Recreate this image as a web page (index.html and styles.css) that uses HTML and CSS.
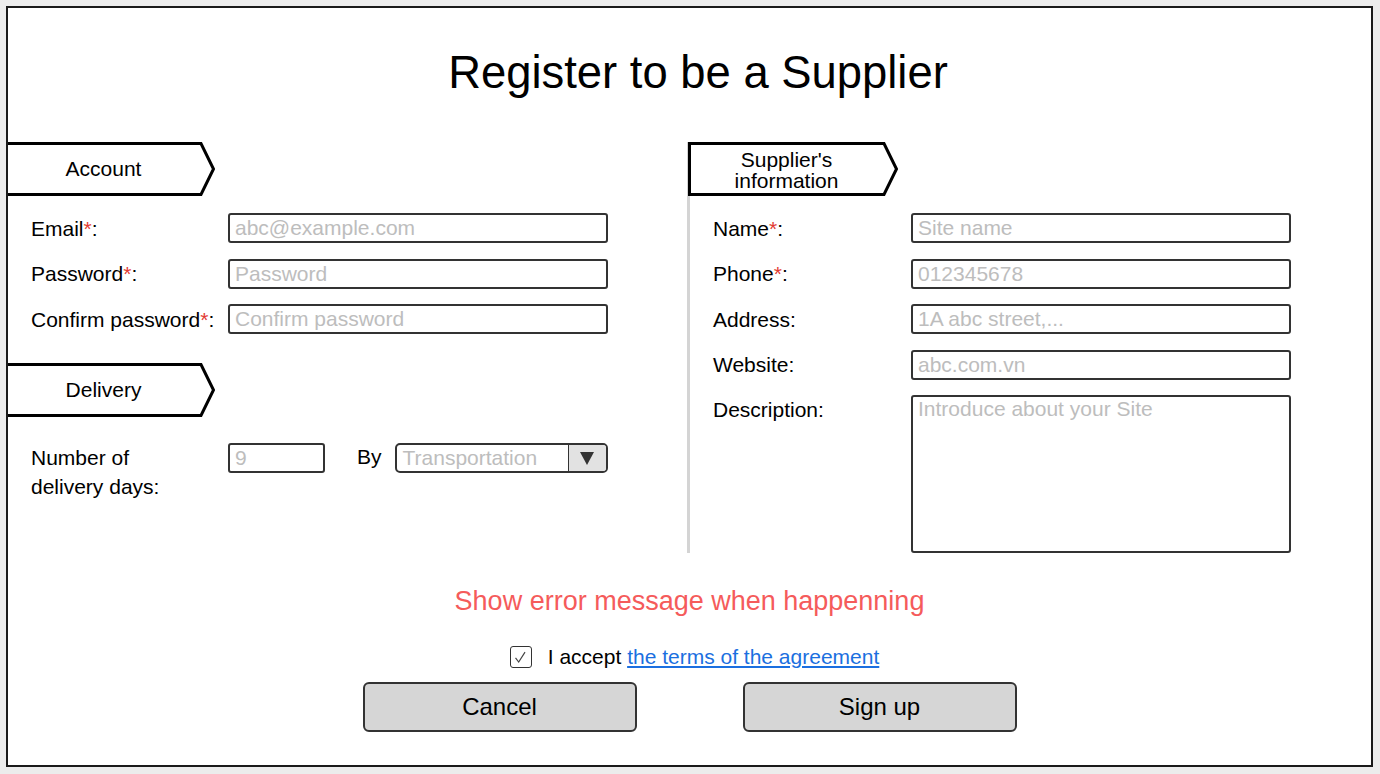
FILE: index.html
```html
<!DOCTYPE html>
<html lang="en">
<head>
    <meta charset="UTF-8">
    <meta name="viewport" content="width=device-width, initial-scale=1.0">
    <title>Register to be a Supplier</title>
    <link rel="stylesheet" href="styles.css">
</head>
<body>
    <div class="frame">
        <h1 class="title">Register to be a Supplier</h1>

        <div class="columns">
            <div class="col col-left">
                <div class="tab">
                    <svg class="tab-shape" viewBox="0 0 211 54" preserveAspectRatio="none">
                        <polygon points="1.5,1.5 196,1.5 208.5,27 196,52.5 1.5,52.5"/>
                    </svg>
                    <span class="tab-text">Account</span>
                </div>
                <div class="rows">
                    <div class="row">
                        <label class="label" for="email">Email<span class="req">*</span>:</label>
                        <input class="field" type="text" id="email" placeholder="abc@example.com">
                    </div>
                    <div class="row">
                        <label class="label" for="password">Password<span class="req">*</span>:</label>
                        <input class="field" type="password" id="password" placeholder="Password">
                    </div>
                    <div class="row">
                        <label class="label" for="confirm">Confirm password<span class="req">*</span>:</label>
                        <input class="field" type="password" id="confirm" placeholder="Confirm password">
                    </div>
                </div>

                <div class="tab tab-delivery">
                    <svg class="tab-shape" viewBox="0 0 211 54" preserveAspectRatio="none">
                        <polygon points="1.5,1.5 196,1.5 208.5,27 196,52.5 1.5,52.5"/>
                    </svg>
                    <span class="tab-text">Delivery</span>
                </div>
                <div class="row row-delivery">
                    <label class="label label-tall" for="days">Number of<br>delivery days:</label>
                    <input class="field field-days" type="text" id="days" placeholder="9">
                    <span class="by">By</span>
                    <div class="combo">
                        <span class="combo-text">Transportation</span>
                        <span class="combo-btn"><span class="arrow"></span></span>
                    </div>
                </div>
            </div>

            <div class="col col-right">
                <div class="tab">
                    <svg class="tab-shape" viewBox="0 0 211 54" preserveAspectRatio="none">
                        <polygon points="1.5,1.5 196,1.5 208.5,27 196,52.5 1.5,52.5"/>
                    </svg>
                    <span class="tab-text tab-text-small">Supplier's<br>information</span>
                </div>
                <div class="rows rows-right">
                    <div class="row">
                        <label class="label label-wide" for="name">Name<span class="req">*</span>:</label>
                        <input class="field" type="text" id="name" placeholder="Site name">
                    </div>
                    <div class="row">
                        <label class="label label-wide" for="phone">Phone<span class="req">*</span>:</label>
                        <input class="field" type="text" id="phone" placeholder="012345678">
                    </div>
                    <div class="row">
                        <label class="label label-wide" for="address">Address:</label>
                        <input class="field" type="text" id="address" placeholder="1A abc street,...">
                    </div>
                    <div class="row">
                        <label class="label label-wide" for="website">Website:</label>
                        <input class="field" type="text" id="website" placeholder="abc.com.vn">
                    </div>
                    <div class="row row-top">
                        <label class="label label-wide label-tall" for="description">Description:</label>
                        <textarea class="field field-area" id="description" placeholder="Introduce about your Site"></textarea>
                    </div>
                </div>
            </div>
        </div>

        <p class="error">Show error message when happenning</p>

        <div class="agree">
            <span class="check">
                <svg viewBox="0 0 21 21"><polyline points="5,11 8.5,15.5 15.5,4.5"/></svg>
            </span>
            <span>I accept <a href="#" class="terms">the terms of the agreement</a></span>
        </div>

        <div class="actions">
            <button class="btn" type="button">Cancel</button>
            <button class="btn" type="button">Sign up</button>
        </div>
    </div>
</body>
</html>
```

FILE: styles.css
```css
body {
    margin: 0;
    padding: 6px;
    background-color: #ececec;
    font-family: "Liberation Sans", Arial, Helvetica, sans-serif;
    font-size: 21px;
    color: #000;
}
.frame {
    box-sizing: border-box;
    width: 1367px;
    height: 761px;
    border: 2px solid #1a1a1a;
    background: #fff;
    overflow: hidden;
}
.title {
    margin: 39px 0 43px;
    padding-left: 17px;
    text-align: center;
    font-size: 45.4px;
    font-weight: normal;
    line-height: 52px;
}
.columns {
    display: flex;
    height: 411px;
}
.col-left {
    width: 603px;
    margin-left: -3px;
}
.col-right {
    margin-left: 79px;
    border-left: 3px solid #d4d4d4;
}

/* section tabs */
.tab {
    position: relative;
    width: 211px;
    height: 54px;
    display: flex;
    align-items: center;
    justify-content: center;
    padding-right: 14px;
    box-sizing: border-box;
}
.col-right .tab {
    margin-left: -2px;
}
.tab-shape {
    position: absolute;
    left: 0;
    top: 0;
    width: 211px;
    height: 54px;
}
.tab-shape polygon {
    fill: #fff;
    stroke: #000;
    stroke-width: 3;
}
.tab-text {
    position: relative;
    text-align: center;
}
.tab-text-small {
    line-height: 21px;
    padding-top: 1px;
}
.tab-delivery {
    margin-top: 29px;
}

/* form rows */
.rows {
    display: flex;
    flex-direction: column;
    gap: 15.5px;
    margin-top: 17px;
}
.row {
    display: flex;
    align-items: center;
    padding-left: 26px;
}
.rows-right .row {
    padding-left: 23px;
}
.row-top {
    align-items: flex-start;
}
.label {
    width: 197px;
    flex-shrink: 0;
    line-height: 29px;
}
.label-wide {
    width: 198px;
}
.req {
    color: #e23a32;
}
.field {
    box-sizing: border-box;
    width: 380px;
    height: 30px;
    margin: 0;
    padding: 0 5px;
    border: 2px solid #333;
    border-radius: 3px;
    font-family: inherit;
    font-size: 21px;
    color: #000;
    background: #fff;
    outline: none;
}
.field::placeholder {
    color: #bdbdbd;
}
.field-area {
    height: 158px;
    padding-top: 0;
    line-height: 24px;
    resize: none;
    display: block;
}
.row-delivery {
    align-items: flex-start;
    margin-top: 26px;
}
.field-days {
    width: 97px;
}
.by {
    margin-left: 32px;
    line-height: 28px;
}
.combo {
    box-sizing: border-box;
    display: flex;
    width: 213px;
    height: 30px;
    margin-left: 13px;
    border: 2px solid #333;
    border-radius: 5px;
    overflow: hidden;
}
.combo-text {
    flex: 1;
    padding-left: 6px;
    line-height: 26px;
    color: #bdbdbd;
}
.combo-btn {
    width: 37px;
    display: flex;
    align-items: center;
    justify-content: center;
    border-left: 1.5px solid #333;
    background: #e2e2e2;
}
.arrow {
    width: 0;
    height: 0;
    border-left: 7px solid transparent;
    border-right: 7px solid transparent;
    border-top: 13px solid #333;
}

/* bottom */
.error {
    margin: 32px 0 0;
    text-align: center;
    font-size: 27px;
    line-height: 32px;
    color: #f55b5b;
}
.agree {
    display: flex;
    align-items: center;
    justify-content: center;
    gap: 16px;
    margin-top: 28px;
    padding-left: 10px;
    height: 24px;
    line-height: 24px;
}
.check {
    box-sizing: border-box;
    width: 22px;
    height: 22px;
    border: 1.5px solid #333;
    border-radius: 3px;
    display: flex;
    align-items: center;
    justify-content: center;
}
.check svg {
    width: 19px;
    height: 19px;
}
.check polyline {
    fill: none;
    stroke: #444;
    stroke-width: 1.3;
}
.terms {
    color: #1b6fe0;
    text-decoration: underline;
}
.actions {
    display: flex;
    justify-content: center;
    gap: 106px;
    margin-top: 13px;
}
.btn {
    box-sizing: border-box;
    width: 274px;
    height: 50px;
    border: 2px solid #333;
    border-radius: 6px;
    background-color: #d6d6d6;
    font-family: inherit;
    font-size: 24px;
    color: #000;
}
```
